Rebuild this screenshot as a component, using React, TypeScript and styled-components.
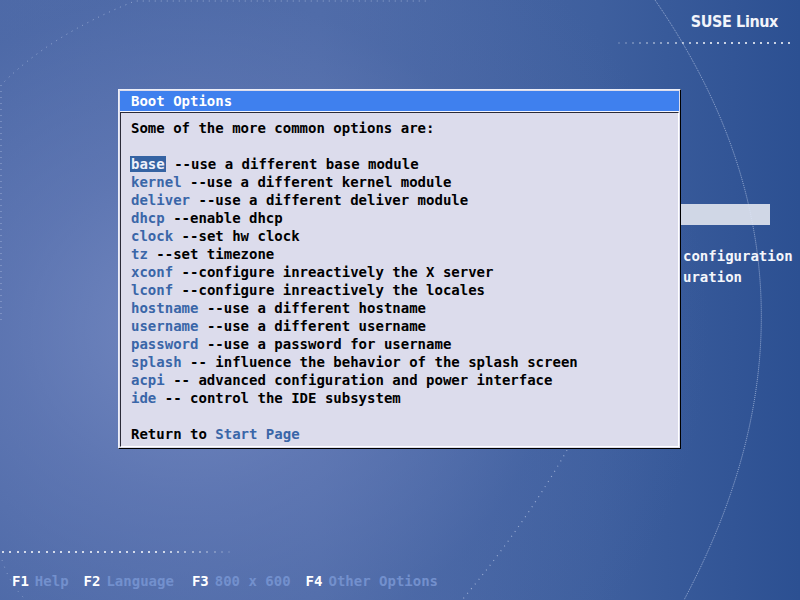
import React from "react";
import styled, { createGlobalStyle } from "styled-components";

const GlobalStyle = createGlobalStyle`
  html, body { margin: 0; padding: 0; overflow: hidden; background: #2b4f91; }
  #root { width: 800px; height: 600px; }
`;

const MONO = `"DejaVu Sans Mono", "Liberation Mono", monospace`;

const Screen = styled.div`
  position: relative;
  width: 800px;
  height: 600px;
  overflow: hidden;
  display: flex;
  flex-direction: column;
  font-family: ${MONO};
  font-size: 14px;
  background:
    radial-gradient(ellipse 520px 480px at 190px 330px, rgba(120, 140, 196, 0.85) 0%, rgba(104, 126, 186, 0.6) 35%, rgba(80, 108, 172, 0.25) 70%, rgba(60, 90, 160, 0) 100%),
    linear-gradient(90deg, #4d69a6 0%, #506ca8 40%, #3e5f9e 75%, #2c5092 100%);
`;

const Decor = styled.svg`
  position: absolute;
  inset: 0;
  pointer-events: none;
`;

const Header = styled.header`
  display: flex;
  flex-direction: column;
  align-items: flex-end;
  padding: 11px 22px 0 0;
`;

const Brand = styled.div`
  font-family: "DejaVu Sans Condensed", "DejaVu Sans", sans-serif;
  font-size: 16px;
  font-weight: bold;
  letter-spacing: -0.4px;
  line-height: 22px;
  color: #f2f4fa;
`;

const DotRow = styled.div<{ $gap: number }>`
  display: flex;
  gap: ${(p) => p.$gap}px;
  align-items: center;
  height: 2px;
`;

const Dot = styled.span`
  display: block;
  width: 2px;
  height: 2px;
  background: #ffffff;
  border-radius: 1px;
`;

const TopDots = styled(DotRow)`
  margin-top: 9px;
  margin-right: -12px;
`;

const Menu = styled.nav`
  display: flex;
  flex-direction: column;
  margin: 139px 0 0 439px;
  width: 331px;
`;

const MenuItem = styled.div<{ $active?: boolean }>`
  height: 21px;
  line-height: 21px;
  padding-left: 8px;
  white-space: pre;
  color: ${(p) => (p.$active ? "#203a70" : "#f4f6fb")};
  background: ${(p) => (p.$active ? "#d0d7e6" : "transparent")};
  font-weight: bold;
`;

const Footer = styled.footer`
  margin-top: auto;
  display: flex;
  flex-direction: column;
  padding: 0 0 10px 0;
`;

const BottomDots = styled(DotRow)`
  margin-left: 2px;
`;

const Keys = styled.div`
  display: flex;
  gap: 15px;
  margin-top: 19px;
  padding-left: 12px;
  line-height: 18px;
  font-weight: bold;
`;

const KeyItem = styled.div<{ $extra?: number }>`
  display: flex;
  margin-right: ${(p) => p.$extra ?? 0}px;
`;

const KeyName = styled.span`
  color: #ffffff;
  margin-right: 6px;
`;

const KeyLabel = styled.span`
  color: #7390cd;
`;

const Dialog = styled.section`
  position: absolute;
  left: 118px;
  top: 89px;
  width: 563px;
  height: 360px;
  box-sizing: border-box;
  display: flex;
  flex-direction: column;
  padding: 1px;
  background: #dcdcec;
  border-style: solid;
  border-width: 1px;
  border-color: #eceef8 #000000 #000000 #eceef8;
`;

const TitleBar = styled.div`
  height: 20px;
  line-height: 20px;
  padding-left: 11px;
  background: #3f80ee;
  color: #ffffff;
  font-weight: bold;
  border-bottom: 1px solid #f4f6ff;
`;

const Panel = styled.div`
  flex: 1;
  box-sizing: border-box;
  padding: 6px 10px 0 10px;
  border-style: solid;
  border-width: 1px;
  border-color: #2a2a38 #ffffff #ffffff #2a2a38;
  color: #000000;
  font-weight: bold;
`;

const Line = styled.div`
  height: 18px;
  line-height: 18px;
  white-space: pre;
`;

const Keyword = styled.span<{ $selected?: boolean }>`
  color: ${(p) => (p.$selected ? "#eef0fa" : "#3a66a8")};
  background: ${(p) => (p.$selected ? "#3563a3" : "transparent")};
  ${(p) => (p.$selected ? "margin-left:-1px; padding:0 1px;" : "")}
`;

const options: [string, string][] = [
  ["base", "--use a different base module"],
  ["kernel", "--use a different kernel module"],
  ["deliver", "--use a different deliver module"],
  ["dhcp", "--enable dhcp"],
  ["clock", "--set hw clock"],
  ["tz", "--set timezone"],
  ["xconf", "--configure inreactively the X server"],
  ["lconf", "--configure inreactively the locales"],
  ["hostname", "--use a different hostname"],
  ["username", "--use a different username"],
  ["password", "--use a password for username"],
  ["splash", "-- influence the behavior of the splash screen"],
  ["acpi", "-- advanced configuration and power interface"],
  ["ide", "-- control the IDE subsystem"],
];

const menuItems = [
  "Boot from Hard Disk",
  "Installation",
  "Installation - ACPI Off",
  "Installation - Safe Setting configuration",
  "Installation - Other Config uration",
  "Rescue System",
  "Memory Test",
];

const fkeys = [
  { k: "F1", l: "Help", extra: 0 },
  { k: "F2", l: "Language", extra: 3 },
  { k: "F3", l: "800 x 600", extra: 0 },
  { k: "F4", l: "Other Options", extra: 0 },
];

const topDotOpacity = (i: number, n: number) => {
  const t = i / (n - 1);
  return Math.min(1, 0.2 + t * 1.5);
};

const bottomDotOpacity = (i: number, n: number) => {
  const t = i / (n - 1);
  return t < 0.7 ? 1 : Math.max(0.15, 1 - (t - 0.7) * 2.9);
};

export default function App() {
  const topN = 25;
  const botN = 32;
  return (
    <>
      <GlobalStyle />
      <Screen>
        <Decor width="800" height="600" viewBox="0 0 800 600">
          <path
            d="M 655 0 Q 852 285 684 600"
            fill="none"
            stroke="rgba(220,230,250,0.6)"
            strokeWidth="1"
            strokeDasharray="1 1"
          />
          <path
            d="M 1 320 L 1 85 Q 50 35 135 1 L 430 1"
            fill="none"
            stroke="rgba(220,230,250,0.5)"
            strokeWidth="1"
            strokeDasharray="1 5"
          />
          <path
            d="M 570 445 Q 525 525 462 600"
            fill="none"
            stroke="rgba(220,230,250,0.55)"
            strokeWidth="1.2"
            strokeDasharray="1 5"
          />
          <path
            d="M 2 560 Q 10 585 26 600"
            fill="none"
            stroke="rgba(220,230,250,0.4)"
            strokeWidth="1"
            strokeDasharray="1 6"
          />
        </Decor>

        <Header>
          <Brand>SUSE Linux</Brand>
          <TopDots $gap={5.1}>
            {Array.from({ length: topN }).map((_, i) => (
              <Dot key={i} style={{ opacity: topDotOpacity(i, topN) }} />
            ))}
          </TopDots>
        </Header>

        <Menu>
          {menuItems.map((m, i) => (
            <MenuItem key={m} $active={i === 1}>
              {m}
            </MenuItem>
          ))}
        </Menu>

        <Footer>
          <BottomDots $gap={5.3}>
            {Array.from({ length: botN }).map((_, i) => (
              <Dot key={i} style={{ opacity: bottomDotOpacity(i, botN) }} />
            ))}
          </BottomDots>
          <Keys>
            {fkeys.map((f) => (
              <KeyItem key={f.k} $extra={f.extra}>
                <KeyName>{f.k}</KeyName>
                <KeyLabel>{f.l}</KeyLabel>
              </KeyItem>
            ))}
          </Keys>
        </Footer>

        <Dialog>
          <TitleBar>Boot Options</TitleBar>
          <Panel>
            <Line>Some of the more common options are:</Line>
            <Line> </Line>
            {options.map(([k, d], i) => (
              <Line key={k}>
                <Keyword $selected={i === 0}>{k}</Keyword> {d}
              </Line>
            ))}
            <Line> </Line>
            <Line>
              Return to <Keyword>Start Page</Keyword>
            </Line>
          </Panel>
        </Dialog>
      </Screen>
    </>
  );
}
